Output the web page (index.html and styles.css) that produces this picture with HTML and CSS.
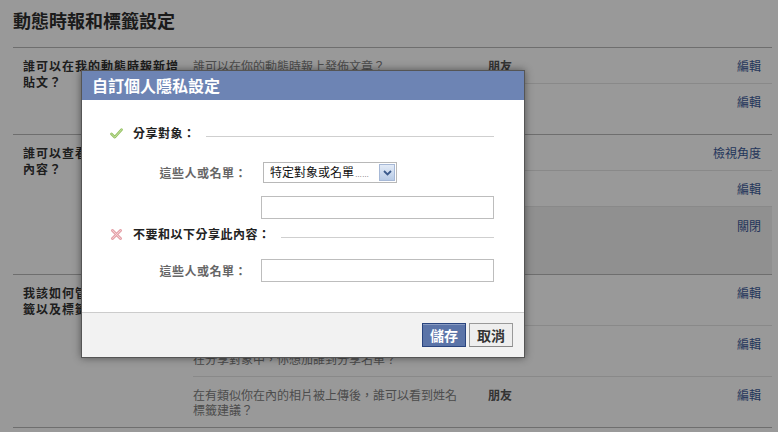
FILE: index.html
```html
<!DOCTYPE html>
<html lang="zh-Hant">
<head>
<meta charset="utf-8">
<title>動態時報和標籤設定</title>
<link rel="stylesheet" href="styles.css">
</head>
<body>
<div class="page">
  <h1 class="title">動態時報和標籤設定</h1>

  <section class="section">
    <div class="sec-label">誰可以在我的動態時報新增貼文？</div>
    <div class="rows">
      <div class="row">
        <div class="q">誰可以在你的動態時報上發佈文章？</div>
        <div class="val">朋友</div>
        <a class="edit">編輯</a>
      </div>
      <div class="row">
        <div class="q">查看朋友在貼文中標註你的內容，確認後才會顯示在你的動態時報上？</div>
        <div class="val">關閉</div>
        <a class="edit">編輯</a>
      </div>
    </div>
  </section>

  <section class="section">
    <div class="sec-label">誰可以查看我動態時報上的內容？</div>
    <div class="rows">
      <div class="row">
        <div class="q">檢視其他人在你的動態時報上看到的內容</div>
        <div class="val"></div>
        <a class="edit">檢視角度</a>
      </div>
      <div class="row">
        <div class="q">誰可以看到你在動態時報上被標註的貼文？</div>
        <div class="val">朋友</div>
        <a class="edit">編輯</a>
      </div>
      <div class="row hl">
        <div class="q">誰可以看到其他人在你的動態時報上所發佈的內容？這些內容仍可能出現在動態消息、搜尋結果以及其他地方。</div>
        <div class="val">朋友</div>
        <a class="edit">關閉</a>
      </div>
    </div>
  </section>

  <section class="section">
    <div class="sec-label">我該如何管理別人新增的標籤以及標籤建議？</div>
    <div class="rows">
      <div class="row">
        <div class="q">審查其他人在你的貼文中所新增的標籤，確認後才會顯示在臉書上？</div>
        <div class="val">關閉</div>
        <a class="edit">編輯</a>
      </div>
      <div class="row">
        <div class="q">當你在貼文中被標註時，如果對方目前還沒有被列在分享對象中，你想加誰到分享名單？</div>
        <div class="val">朋友</div>
        <a class="edit">編輯</a>
      </div>
      <div class="row">
        <div class="q">在有類似你在內的相片被上傳後，誰可以看到姓名標籤建議？</div>
        <div class="val">朋友</div>
        <a class="edit">編輯</a>
      </div>
    </div>
  </section>
</div>

<div class="overlay"></div>

<div class="dialog">
  <div class="dlg-head">自訂個人隱私設定</div>
  <div class="dlg-body">
    <div class="sub-head sh-share">
      <svg class="ico" width="13" height="11" viewBox="0 0 13 11">
        <path d="M1.5 6 L4.8 9.2 L11.6 1.6" fill="none" stroke="#93c061" stroke-width="2.6" stroke-linecap="round" stroke-linejoin="round"/>
        <path d="M1.5 6 L4.8 9.2 L11.6 1.6" fill="none" stroke="#cfe8ad" stroke-width="0.9" stroke-linecap="round" stroke-linejoin="round"/>
      </svg>
      <span class="sh-text">分享對象：</span>
      <i class="rule"></i>
    </div>
    <div class="field f-select">
      <span class="lbl">這些人或名單：</span>
      <div class="select">
        <span class="sel-text">特定對象或名單<span class="ell">……</span></span>
        <span class="sel-btn">
          <svg width="9" height="6" viewBox="0 0 9 6"><path d="M1 1 L4.5 4.5 L8 1" fill="none" stroke="#3b5a8c" stroke-width="1.8"/></svg>
        </span>
      </div>
    </div>
    <div class="field f-extra">
      <span class="lbl"></span>
      <div class="input"></div>
    </div>
    <div class="sub-head sh-deny">
      <svg class="ico" width="13" height="11" viewBox="0 0 13 11">
        <path d="M2.5 1.5 L10.5 9.5 M10.5 1.5 L2.5 9.5" fill="none" stroke="#e5a3aa" stroke-width="3" stroke-linecap="round"/>
        <path d="M2.5 1.5 L10.5 9.5 M10.5 1.5 L2.5 9.5" fill="none" stroke="#f5d3d6" stroke-width="0.9" stroke-linecap="round"/>
      </svg>
      <span class="sh-text">不要和以下分享此內容：</span>
      <i class="rule"></i>
    </div>
    <div class="field f-deny">
      <span class="lbl">這些人或名單：</span>
      <div class="input"></div>
    </div>
  </div>
  <div class="dlg-foot">
    <button class="btn btn-primary" type="button">儲存</button>
    <button class="btn" type="button">取消</button>
  </div>
</div>
</body>
</html>
```

FILE: styles.css
```css
* { box-sizing: border-box; }

html, body {
  margin: 0;
  padding: 0;
}

body {
  width: 778px;
  height: 432px;
  overflow: hidden;
  position: relative;
  background: #fff;
  font-family: "Noto Sans CJK TC", "Liberation Sans", sans-serif;
  color: #333;
}

.page {
  padding: 0 6px 0 13px;
}

.title {
  margin: 0;
  height: 48px;
  padding-top: 8px;
  font-size: 18px;
  line-height: 24px;
  font-weight: bold;
  color: #2e2e2e;
  border-bottom: 1px solid #b8b8b8;
}

.section {
  display: grid;
  grid-template-columns: 180px 1fr;
  border-bottom: 1px solid #b8b8b8;
}

.sec-label {
  padding: 10px 10px 0 10px;
  font-size: 12px;
  letter-spacing: 1px;
  line-height: 16px;
  font-weight: bold;
  color: #333;
}

.row {
  display: grid;
  grid-template-columns: 295px 1fr auto;
  padding: 10px 11px 10px 0;
  font-size: 12px;
  line-height: 15px;
  border-top: 1px solid #e4e4e4;
}

.row:first-child {
  border-top: 0;
}

.row.hl {
  background: #f0f0f0;
  padding-top: 11px;
  padding-bottom: 11px;
}

.q {
  color: #808080;
  padding-right: 25px;
}

.val {
  font-weight: bold;
  color: #555;
}

.edit {
  color: #3b5998;
  text-decoration: none;
}

.overlay {
  position: absolute;
  inset: 0;
  background: rgba(0, 0, 0, 0.4);
}

.dialog {
  position: absolute;
  left: 81px;
  top: 70px;
  width: 444px;
  background: #fff;
  border: 1px solid #555;
  box-shadow: 0 0 8px rgba(0, 0, 0, 0.45);
}

.dlg-head {
  height: 29px;
  padding-left: 10px;
  background: #6d84b4;
  color: #fff;
  font-size: 16px;
  font-weight: bold;
  line-height: 29px;
}

.dlg-body {
  display: flex;
  flex-direction: column;
  padding: 25px 30px 30px 28px;
  height: 212px;
}

.sub-head {
  display: flex;
  align-items: center;
  height: 16px;
}

.ico {
  flex: none;
  margin-right: 10px;
}

.sh-text {
  font-size: 12px;
  letter-spacing: 0.5px;
  font-weight: bold;
  color: #222;
  line-height: 16px;
}

.rule {
  flex: 1;
  margin-left: 10px;
  border-top: 1px solid #cfcfcf;
  position: relative;
  top: 3px;
}

.sh-deny {
  margin-top: 7px;
}

.field {
  display: grid;
  grid-template-columns: 151px 1fr;
  align-items: center;
}

.f-select {
  margin-top: 21px;
  height: 21px;
}

.f-extra {
  margin-top: 13px;
  height: 23px;
}

.f-deny {
  margin-top: 17px;
  height: 23px;
}

.lbl {
  text-align: right;
  padding-right: 14px;
  font-size: 12px;
  letter-spacing: 0.5px;
  font-weight: bold;
  color: #666;
}

.input {
  height: 23px;
  border: 1px solid #bdbdbd;
  background: #fff;
}

.select {
  margin-left: 2px;
  width: 134px;
  height: 21px;
  border: 1px solid #b8b8b8;
  display: flex;
  align-items: center;
  justify-content: space-between;
  padding: 0 1px 0 6px;
  background: #fff;
}

.sel-text {
  font-size: 12px;
  color: #111;
  line-height: 19px;
  white-space: nowrap;
}

.ell {
  font-family: "Liberation Sans", sans-serif;
  font-size: 7px;
  color: #444;
  margin-left: 1px;
}

.sel-btn {
  width: 16px;
  height: 17px;
  display: flex;
  align-items: center;
  justify-content: center;
  background: linear-gradient(#e3ebf7, #b8cbe6);
  border: 1px solid #a6b8d6;
}

.dlg-foot {
  height: 45px;
  border-top: 1px solid #ccc;
  background: #f2f2f2;
  display: flex;
  justify-content: flex-end;
  align-items: center;
  gap: 3px;
  padding-right: 11px;
}

.btn {
  width: 44px;
  height: 24px;
  padding: 0;
  margin: 0;
  font-family: inherit;
  font-size: 14px;
  font-weight: bold;
  line-height: 22px;
  color: #333;
  background: #eee;
  border: 1px solid #999;
  border-bottom-color: #888;
}

.btn-primary {
  background: #5b74a8;
  border-color: #29447e;
  color: #fff;
  box-shadow: inset 0 1px 0 #8a9cc2;
}
```
